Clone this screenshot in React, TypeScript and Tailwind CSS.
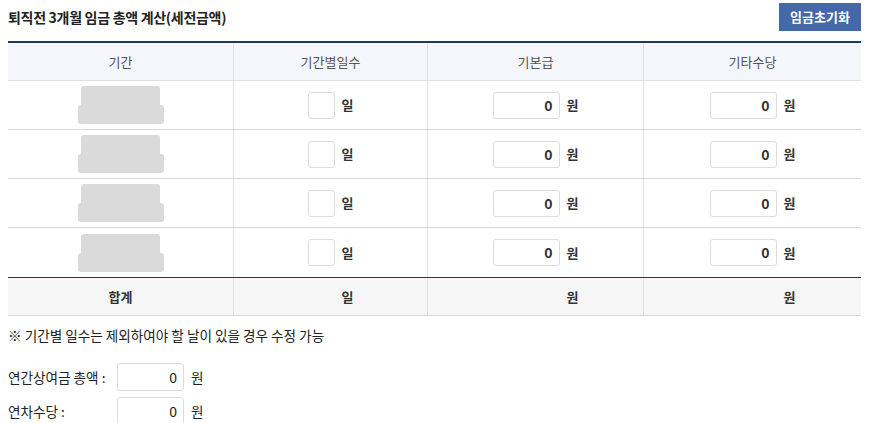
import React from "react";

const font = { fontFamily: '"Noto Sans CJK KR", "Noto Sans", sans-serif' };

// 기간 칸의 회색 자리표시 블록
const PeriodBlock = () => (
  <div className="flex flex-col items-center">
    <div className="w-[79px] h-[19px] bg-[#dadada] rounded-t-[3px]" />
    <div className="w-[86px] h-[19px] bg-[#dadada] rounded-[3px]" />
  </div>
);

const MoneyInput = ({ unit = "원" }: { unit?: string }) => (
  <div className="flex items-center justify-center gap-[7px]">
    <div className="w-[67px] h-[27px] border border-[#dcdcdc] rounded-[3px] bg-white flex items-center justify-end pr-[6px] text-[14px] font-bold text-[#333]">
      0
    </div>
    <span className="text-[13px] font-bold text-[#333]">{unit}</span>
  </div>
);

const DayInput = () => (
  <div className="flex items-center justify-center gap-[7px]">
    <div className="w-[27px] h-[27px] border border-[#dcdcdc] rounded-[3px] bg-white" />
    <span className="text-[13px] font-bold text-[#333]">일</span>
  </div>
);

export default function App() {
  const rows = [0, 1, 2, 3];
  return (
    <div className="w-[870px] h-[423px] overflow-hidden bg-white" style={font}>
      <div className="flex items-center justify-between pl-2 pr-[9px] pt-[3px] h-[31px]">
        <h2 className="text-[14px] font-bold text-[#222] tracking-[-0.3px]">
          퇴직전 3개월 임금 총액 계산(세전금액)
        </h2>
        <button className="w-[82px] h-[28px] bg-[#4468a8] text-white text-[13px] font-bold">
          임금초기화
        </button>
      </div>

      <div className="mt-[10px] mx-2 w-[853px]">
        <div className="grid grid-cols-[226px_194px_216px_217px] border-t-2 border-t-[#1e3a5f] border-b border-b-[#e0e0e0] bg-[#f4f6fb] text-[13px] text-[#555] h-[40px]">
          <div className="flex items-center justify-center border-r border-[#e0e0e0]">기간</div>
          <div className="flex items-center justify-center border-r border-[#e0e0e0]">기간별일수</div>
          <div className="flex items-center justify-center border-r border-[#e0e0e0]">기본급</div>
          <div className="flex items-center justify-center">기타수당</div>
        </div>
        {rows.map((r) => (
          <div
            key={r}
            className={`grid grid-cols-[226px_194px_216px_217px] h-[49px] ${r < 3 ? "border-b border-[#d6d6d6]" : ""}`}
          >
            <div className="flex items-center justify-center border-r border-[#e0e0e0]">
              <PeriodBlock />
            </div>
            <div className="flex items-center justify-center border-r border-[#e0e0e0]">
              <DayInput />
            </div>
            <div className="flex items-center justify-center border-r border-[#e0e0e0]">
              <MoneyInput />
            </div>
            <div className="flex items-center justify-center">
              <MoneyInput />
            </div>
          </div>
        ))}
        <div className="grid grid-cols-[226px_194px_216px_217px] h-[39px] border-t border-t-[#1e3a5f] border-b border-b-[#d6d6d6] bg-[#f6f6f6] text-[13px] font-bold text-[#333]">
          <div className="flex items-center justify-center border-r border-[#e0e0e0]">합계</div>
          <div className="flex items-center justify-center gap-[7px] border-r border-[#e0e0e0]">
            <span className="w-[27px]" />
            <span>일</span>
          </div>
          <div className="flex items-center justify-center gap-[7px] border-r border-[#e0e0e0]">
            <span className="w-[67px]" />
            <span>원</span>
          </div>
          <div className="flex items-center justify-center gap-[7px]">
            <span className="w-[67px]" />
            <span>원</span>
          </div>
        </div>
      </div>

      <p className="mt-[9px] ml-2 text-[13.6px] text-[#222]">
        ※ 기간별 일수는 제외하여야 할 날이 있을 경우 수정 가능
      </p>

      <div className="mt-[18px] ml-2 flex flex-col gap-[6px] text-[13.6px] text-[#222]">
        <div className="flex items-center">
          <span className="w-[109px]">연간상여금 총액 :</span>
          <div className="w-[67px] h-[28px] border border-[#dcdcdc] rounded-[3px] flex items-center justify-end pr-[6px] text-[14px]">
            0
          </div>
          <span className="ml-[7px]">원</span>
        </div>
        <div className="flex items-center">
          <span className="w-[109px]">연차수당 :</span>
          <div className="w-[67px] h-[28px] border border-[#dcdcdc] rounded-[3px] flex items-center justify-end pr-[6px] text-[14px]">
            0
          </div>
          <span className="ml-[7px]">원</span>
        </div>
      </div>
    </div>
  );
}
